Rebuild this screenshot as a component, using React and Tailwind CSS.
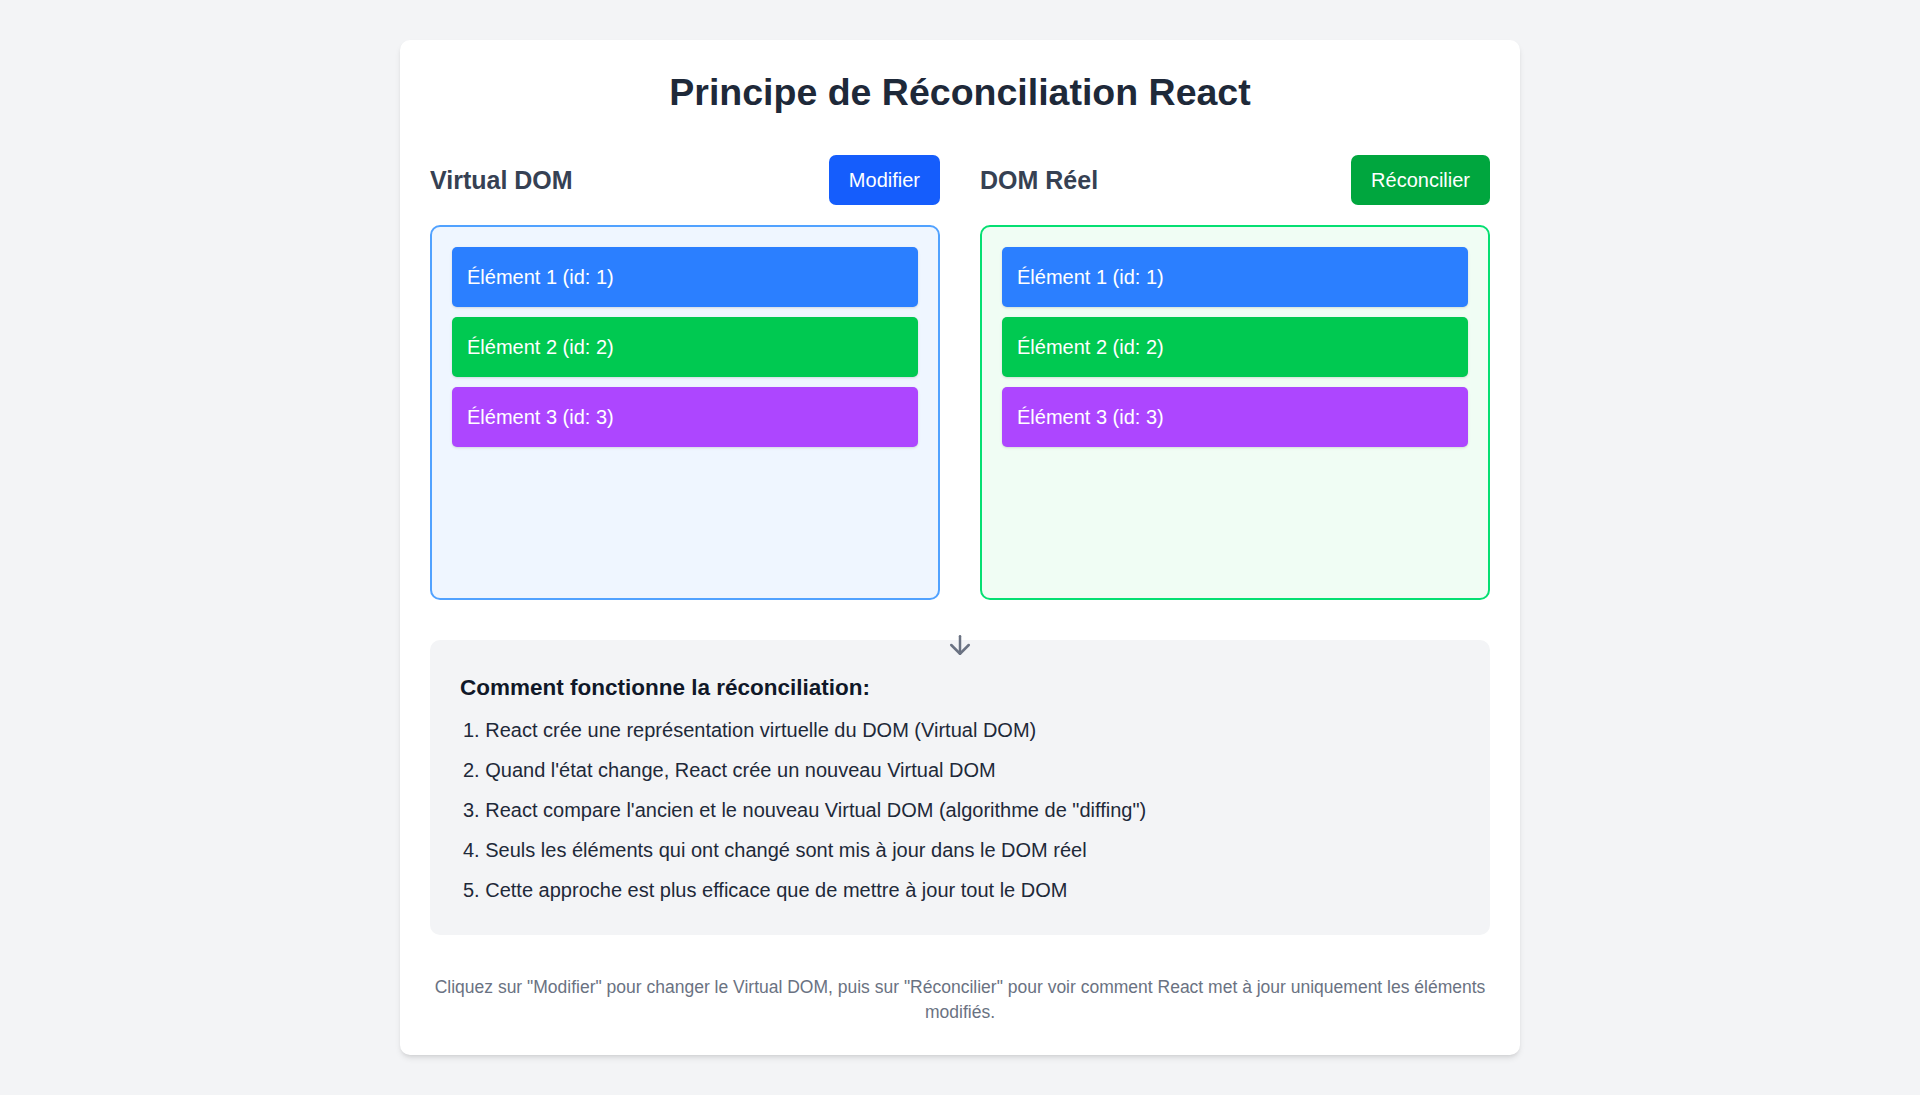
import React, { useState } from "react";
import { ArrowDown } from "lucide-react";

const initialItems = [
  { id: 1, label: "Élément 1", color: "bg-blue-500" },
  { id: 2, label: "Élément 2", color: "bg-green-500" },
  { id: 3, label: "Élément 3", color: "bg-purple-500" },
];

const steps = [
  "React crée une représentation virtuelle du DOM (Virtual DOM)",
  "Quand l'état change, React crée un nouveau Virtual DOM",
  'React compare l\'ancien et le nouveau Virtual DOM (algorithme de "diffing")',
  "Seuls les éléments qui ont changé sont mis à jour dans le DOM réel",
  "Cette approche est plus efficace que de mettre à jour tout le DOM",
];

const ItemList = ({ items }) => (
  <div className="flex flex-col gap-[10px]">
    {items.map((item) => (
      <div
        key={item.id}
        className={`${item.color} rounded-[5px] px-[15px] py-[15px] text-[20px] leading-[30px] text-white shadow-sm`}
      >
        {item.label} (id: {item.id})
      </div>
    ))}
  </div>
);

const App = () => {
  const [virtualItems, setVirtualItems] = useState(initialItems);
  const [realItems, setRealItems] = useState(initialItems);

  const handleModify = () => {
    setVirtualItems((prev) =>
      prev.map((item) =>
        item.id === 2 ? { ...item, label: "Élément 2 modifié" } : item
      )
    );
  };

  const handleReconcile = () => {
    setRealItems(virtualItems);
  };

  return (
    <div className="min-h-screen bg-gray-100 p-[40px] font-['Liberation_Sans',Arial,sans-serif]">
      <div className="mx-auto w-[1120px] rounded-[10px] bg-white p-[30px] shadow-md">
        <h1 className="mb-[40px] text-center text-[37.5px] leading-[45px] font-bold text-gray-800">
          Principe de Réconciliation React
        </h1>

        <div className="grid grid-cols-2 gap-[40px]">
          <div>
            <div className="mb-[20px] flex items-center justify-between">
              <h2 className="text-[25px] leading-[35px] font-semibold text-gray-700">
                Virtual DOM
              </h2>
              <button
                onClick={handleModify}
                className="rounded-[7px] bg-blue-600 px-[20px] py-[10px] text-[20px] leading-[30px] text-white"
              >
                Modifier
              </button>
            </div>
            <div className="h-[375px] rounded-[10px] border-2 border-blue-400 bg-blue-50 p-[20px]">
              <ItemList items={virtualItems} />
            </div>
          </div>

          <div>
            <div className="mb-[20px] flex items-center justify-between">
              <h2 className="text-[25px] leading-[35px] font-semibold text-gray-700">
                DOM Réel
              </h2>
              <button
                onClick={handleReconcile}
                className="rounded-[7px] bg-green-600 px-[20px] py-[10px] text-[20px] leading-[30px] text-white"
              >
                Réconcilier
              </button>
            </div>
            <div className="h-[375px] rounded-[10px] border-2 border-green-400 bg-green-50 p-[20px]">
              <ItemList items={realItems} />
            </div>
          </div>
        </div>

        <div className="relative mt-[40px] rounded-[10px] bg-gray-100 p-[30px]">
          <div className="absolute -top-[10px] left-0 right-0 flex justify-center">
            <ArrowDown size={30} strokeWidth={2} className="text-gray-500" />
          </div>
          <h3 className="mb-[10px] text-[22.5px] leading-[35px] font-semibold text-gray-900">
            Comment fonctionne la réconciliation:
          </h3>
          <ol className="list-inside list-decimal space-y-[10px] pl-[3px] text-[20px] leading-[30px] text-gray-800">
            {steps.map((step) => (
              <li key={step}>{step}</li>
            ))}
          </ol>
        </div>

        <p className="mt-[40px] text-center text-[17.5px] leading-[25px] text-gray-500">
          Cliquez sur "Modifier" pour changer le Virtual DOM, puis sur
          "Réconcilier" pour voir comment React met à jour uniquement les
          éléments modifiés.
        </p>
      </div>
    </div>
  );
};

export default App;
